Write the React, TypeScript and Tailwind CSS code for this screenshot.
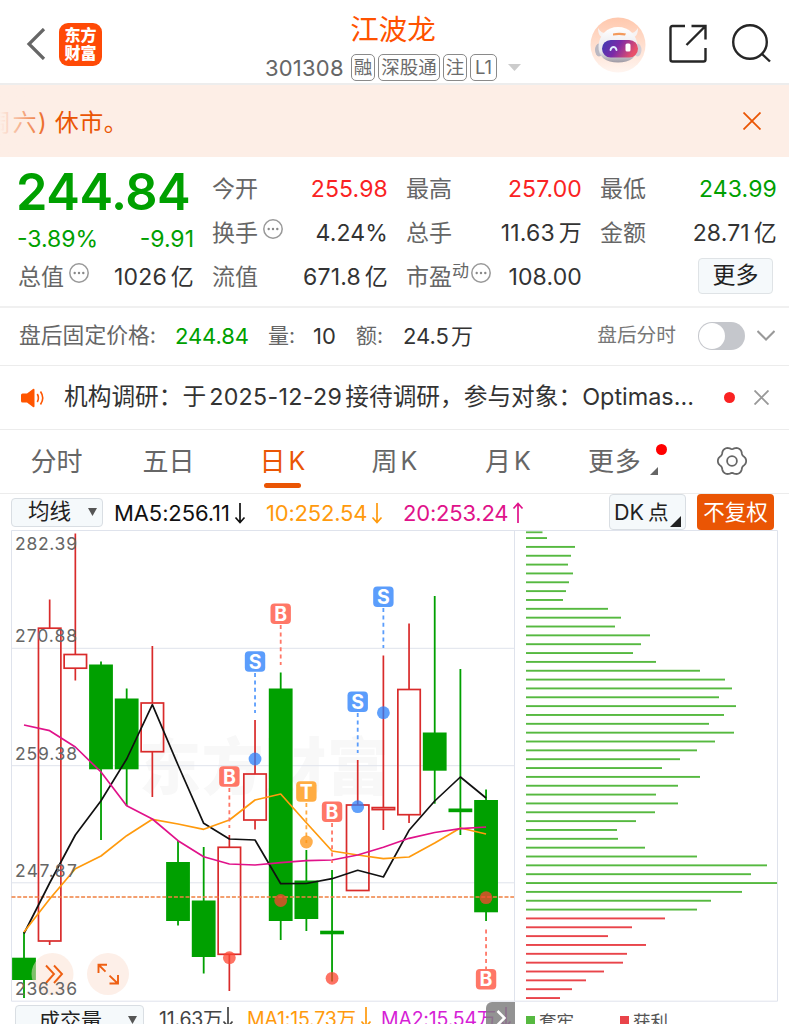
import type { ReactNode } from "react";
import clsx from "clsx";

const GREEN = "#00a000";
const RED = "#d92b2b";

type Candle = {
  up: boolean;
  high: number;
  top: number;
  bottom: number;
  low: number;
};

const candles: Candle[] = [
  { up: false, high: 932, top: 957.7, bottom: 980, low: 998 },
  { up: true, high: 599.5, top: 628.2, bottom: 941, low: 945 },
  { up: true, high: 533.5, top: 654.5, bottom: 668.2, low: 680.5 },
  { up: false, high: 661.5, top: 664.5, bottom: 769.3, low: 840 },
  { up: false, high: 688.5, top: 698.5, bottom: 769.3, low: 806 },
  { up: true, high: 646, top: 703, bottom: 751.7, low: 797 },
  { up: false, high: 841, top: 862, bottom: 921, low: 925.5 },
  { up: false, high: 847, top: 900.5, bottom: 957, low: 973.5 },
  { up: true, high: 835, top: 847.3, bottom: 954.3, low: 991 },
  { up: true, high: 720, top: 774, bottom: 820, low: 829.5 },
  { up: false, high: 672.5, top: 688.5, bottom: 921, low: 940 },
  { up: false, high: 850, top: 880.5, bottom: 919, low: 931 },
  { up: false, high: 870, top: 930.7, bottom: 934.3, low: 981.5 },
  { up: true, high: 760, top: 805, bottom: 890.5, low: 890.5 },
  { up: true, high: 655.5, top: 807.6, bottom: 809.6, low: 830 },
  { up: true, high: 623.5, top: 689.5, bottom: 814.7, low: 823 },
  { up: false, high: 596, top: 732.5, bottom: 770.7, low: 803.7 },
  { up: false, high: 669, top: 808.5, bottom: 812.2, low: 835 },
  { up: false, high: 789.5, top: 800, bottom: 912.3, low: 921 },
];

const candleX = (i: number) => 24 + i * 25.67;

const ma5 = [933.5, 883, 835, 800.7, 759, 704.7, 765, 823.3, 839, 840, 883.7, 883.5, 878.7, 870.3, 877, 830.3, 801, 777, 798];
const ma10 = [932, 899, 868.7, 856, 835.7, 819.3, 824, 829.3, 820, 800, 794, 822.7, 851, 855, 858.7, 857, 843, 828, 834];
const ma20 = [725, 730.7, 747, 772, 805.7, 819, 840.7, 856.7, 864, 865, 862.7, 860.7, 860, 855, 847.3, 838.3, 832.5, 828.7, 827];

const toPoints = (ys: number[]) => ys.map((y, i) => `${candleX(i)},${y}`).join(" ");

const markerColors: Record<string, string> = { B: "#ff7767", S: "#5b9dfc", T: "#ffac42" };
const dotColors: Record<string, string> = { B: "#fe4430", S: "#2b80fa", T: "#ff9310" };

const markers = [
  { kind: "B", i: 8, badge: 776.5, from: 788, dot: 957.7 },
  { kind: "S", i: 9, badge: 661.5, from: 673, dot: 759 },
  { kind: "B", i: 10, badge: 613.7, from: 625, dot: 900.5 },
  { kind: "T", i: 11, badge: 791.5, from: 803, dot: 842 },
  { kind: "B", i: 12, badge: 811.7, from: 823, dot: 978.3 },
  { kind: "S", i: 13, badge: 701.7, from: 713, dot: 806.7 },
  { kind: "S", i: 14, badge: 596.7, from: 608, dot: 712.7 },
  { kind: "B", i: 18, badge: 979.3, from: 929.5, dot: 897.7 },
];

const priceLabels = [
  { text: "282.39", y: 550 },
  { text: "270.88", y: 642.3 },
  { text: "259.38", y: 759.8 },
  { text: "247.87", y: 876.8 },
  { text: "236.36", y: 995 },
];

// right end of every chip-distribution bar, top to bottom
const chips = [
  547, 575, 571, 568, 573, 569, 566, 563, 608, 621, 615, 650, 641, 633, 656, 700, 725, 732, 719, 736, 724, 709, 734, 715,
  697, 680, 662, 700, 678, 656, 678, 655, 636, 617, 618, 645, 697, 767, 751, 777, 742, 711, 697, 665, 632, 608, 646, 627,
  623, 604, 586, 572, 560,
];
const FIRST_PROFIT = 43;

function KLineChart() {
  return (
    <svg viewBox="0 530 789 472" className="block h-[472px] w-[789px] shrink-0">
      <text
        x="139"
        y="790"
        fontSize="62"
        fontWeight="900"
        fill="#f8f8f8"
        textLength="250"
        fontFamily="Noto Sans CJK SC, sans-serif"
      >
        东方财富
      </text>

      <g stroke="#dfe3ec" strokeWidth="1">
        <path d="M11.5 648.3H514M11.5 765.7H514M11.5 882.8H514" />
        <path d="M11.5 530.5H777.5V1001.2H11.5ZM514.5 530.5V1001.2" fill="none" />
      </g>

      {candles.map((c, i) => {
        const x = candleX(i);
        if (!c.up) {
          return (
            <g key={i} fill={GREEN}>
              <rect x={x - 0.9} y={c.high} width="1.8" height={c.low - c.high} />
              <rect x={x - 11.9} y={c.top} width="23.8" height={c.bottom - c.top} />
            </g>
          );
        }
        return (
          <g key={i} stroke={RED} strokeWidth="1.7" fill="none">
            <path d={`M${x} ${c.high}V${c.top}M${x} ${c.bottom}V${c.low}`} />
            <rect x={x - 11.2} y={c.top} width="22.4" height={c.bottom - c.top} />
          </g>
        );
      })}

      <path d="M11.5 897H514" stroke="#f08040" strokeWidth="1.5" strokeDasharray="4 1.8" />

      <g fill="none" strokeWidth="1.7" strokeLinejoin="round">
        <polyline points={toPoints(ma5)} stroke="#111111" />
        <polyline points={toPoints(ma10)} stroke="#ff9a0d" />
        <polyline points={toPoints(ma20)} stroke="#e0128a" />
      </g>

      {markers.map((m) => {
        const x = candleX(m.i);
        return (
          <g key={m.i}>
            <path
              d={`M${x} ${m.from}V${m.from + 40}`}
              stroke={markerColors[m.kind]}
              strokeWidth="1.8"
              strokeDasharray="4 3.4"
            />
            <circle cx={x} cy={m.dot} r="6.4" fill={dotColors[m.kind]} fillOpacity="0.75" />
            <rect x={x - 10.2} y={m.badge - 10.2} width="20.4" height="20.4" rx="4" fill={markerColors[m.kind]} />
            <text
              x={x}
              y={m.badge + 7}
              textAnchor="middle"
              fontSize="19.5"
              fontWeight="700"
              fill="#ffffff"
              fontFamily="Inter, sans-serif"
            >
              {m.kind}
            </text>
          </g>
        );
      })}

      <circle cx="52.5" cy="974" r="21" fill="#fbdfd0" fillOpacity="0.5" />
      <path d="M46 965.5 54 974 46 983M54 965.5 62 974 54 983" fill="none" stroke="#ee5f12" strokeWidth="1.9" />
      <circle cx="108" cy="974" r="21" fill="#fdefe8" />
      <path
        d="M107 964.8H98.5V973M98.8 965 105.5 971.6M109.5 975.6 117.5 983.2M118 975V983.5H109.5"
        fill="none"
        stroke="#ee5f12"
        strokeWidth="1.9"
      />

      {priceLabels.map((p) => (
        <text key={p.text} x="15" y={p.y} fontSize="17.5" fill="#666666" textLength="62" fontFamily="Inter, sans-serif">
          {p.text}
        </text>
      ))}

      <rect x="526" y="531.4" width="16.5" height="1.8" fill="#5cb946" />
      {chips.map((end, i) => (
        <rect
          key={i}
          x="526"
          y={537.1 + i * 8.846}
          width={end - 526}
          height="1.9"
          fill={i < FIRST_PROFIT ? "#56b940" : "#e9444a"}
        />
      ))}
    </svg>
  );
}

function RobotAvatar() {
  return (
    <svg viewBox="0 0 56 56" className="mt-1 h-14 w-14">
      <defs>
        <linearGradient id="halo" x1="0" y1="0" x2="0" y2="1">
          <stop offset="0" stopColor="#ffc8ad" />
          <stop offset="1" stopColor="#fff5f0" />
        </linearGradient>
        <linearGradient id="visor" x1="0" y1="0" x2="1" y2="0.3">
          <stop offset="0" stopColor="#3a3cb4" />
          <stop offset="0.5" stopColor="#7b2aa8" />
          <stop offset="1" stopColor="#e8506a" />
        </linearGradient>
        <linearGradient id="shell" x1="0" y1="0" x2="0" y2="1">
          <stop offset="0" stopColor="#ffffff" />
          <stop offset="0.7" stopColor="#e6e5ea" />
          <stop offset="1" stopColor="#9d98a2" />
        </linearGradient>
      </defs>
      <circle cx="28" cy="28" r="27.5" fill="url(#halo)" />
      <ellipse cx="9" cy="33" rx="4" ry="6.5" fill="#bab8c2" />
      <ellipse cx="47.5" cy="33" rx="4" ry="6.5" fill="#d2ced6" />
      <path d="M8 11c0 6 2 9 6 10l6-5c-5 1-9 0-12-5ZM48 11c0 6-2 9-6 10l-6-5c5 1 9 0 12-5Z" fill="#f7f3f3" />
      <path d="M28 10c11 0 19 8 19.5 19C48 40 40 45.500 28 45.500S8 40 8.500 29C9 18 17 10 28 10Z" fill="url(#shell)" />
      <path d="M23 16.500q6-1.500 13 0l-1 2q-6-1-12 0Z" fill="#f39a5c" />
      <rect x="12" y="23" width="36" height="17.5" rx="8.7" fill="url(#visor)" />
      <path d="M20.500 33c1-4 5-4 6 0" fill="none" stroke="#dfeaff" strokeWidth="1.9" strokeLinecap="round" />
      <rect x="35.5" y="26.5" width="5" height="8" rx="1.5" fill="#ffffff" />
    </svg>
  );
}

function MoreInfo({ className }: { className?: string }) {
  return (
    <svg viewBox="0 0 20 20" className={clsx("h-5 w-5", className)}>
      <circle cx="10" cy="10" r="9.2" fill="none" stroke="#999999" strokeWidth="1.5" />
      <g fill="#888888">
        <circle cx="5.700" cy="10" r="1.2" />
        <circle cx="10" cy="10" r="1.2" />
        <circle cx="14.300" cy="10" r="1.2" />
      </g>
    </svg>
  );
}

// six soft lobes around the centre
const gearPath =
  Array.from({ length: 73 }, (_, i) => {
    const a = (i * 5 * Math.PI) / 180;
    const r = 13.2 + 1.1 * Math.cos(6 * a) - 0.15 * Math.cos(12 * a);
    return `${i ? "L" : "M"}${(16 + r * Math.cos(a)).toFixed(2)} ${(16 + r * Math.sin(a)).toFixed(2)}`;
  }).join("") + "Z";

function GearIcon() {
  return (
    <svg viewBox="0 0 32 32" className="h-8 w-8" fill="none" stroke="#666666" strokeWidth="1.8">
      <path d={gearPath} strokeLinejoin="round" />
      <circle cx="16" cy="16" r="4.9" />
    </svg>
  );
}

function Tag({ children, className }: { children: ReactNode; className: string }) {
  return (
    <span
      className={clsx(
        "flex h-[27px] items-center justify-center rounded-[5px] border border-[#8a8a8a] text-[18.5px] leading-none text-[#6b6b6b]",
        className,
      )}
    >
      {children}
    </span>
  );
}

function Header() {
  return (
    <header className="grid h-[85px] shrink-0 grid-cols-[265px_256px_1fr] border-b-2 border-[#ededed]">
      <div className="flex items-center pt-[5px] pl-[26px]">
        <svg viewBox="0 0 20 32" className="h-8 w-5" fill="none" stroke="#666666" strokeWidth="3.2">
          <path d="M18 1 3 16 18 31" />
        </svg>
        <div className="ml-[13px] flex h-[43px] w-[43px] flex-col items-center justify-center rounded-[9px] bg-[#ff4a06] text-[16px] leading-[18px] font-black text-white">
          <span>东方</span>
          <span>财富</span>
        </div>
      </div>
      <div className="flex flex-col items-center">
        <h1 className="mt-3 text-[28.5px] leading-[36px] text-[#ff5200]">江波龙</h1>
        <div className="mt-[6px] flex items-center self-stretch">
          <span className="w-[86px] text-[22px] leading-none tracking-[0.2px] text-[#666666]">301308</span>
          <Tag className="w-6">融</Tag>
          <Tag className="ml-[3px] w-[62px]">深股通</Tag>
          <Tag className="ml-[3px] w-6">注</Tag>
          <Tag className="ml-[3px] w-[27px]">L1</Tag>
          <svg viewBox="0 0 13 7" className="ml-[11px] h-[7px] w-[13px]">
            <path d="M0 0h13L6.500 7Z" fill="#cccccc" />
          </svg>
        </div>
      </div>
      <div className="flex items-center pt-[3px] pl-[69px]">
        <RobotAvatar />
        <svg viewBox="0 0 40 40" className="ml-[22px] h-10 w-10" fill="none" stroke="#262626" strokeWidth="2.4">
          <path d="M17 3H4.500Q2.500 3 2.500 5V36.500Q2.500 38.500 4.500 38.500H35.500Q37.500 38.500 37.500 36.500V25" />
          <path d="M23.500 3H37.500V16.500M37.500 3 18.500 22" />
        </svg>
        <svg viewBox="0 0 40 40" className="ml-[24px] h-10 w-10" fill="none" stroke="#262626" strokeWidth="2.4">
          <circle cx="18" cy="19" r="16.8" />
          <path d="M29.500 30.500 38 38.500" />
        </svg>
      </div>
    </header>
  );
}

function Notice() {
  return (
    <div className="relative flex h-[72px] shrink-0 items-center justify-between overflow-hidden bg-[#fdeee6] pr-7 text-[#ea5504]">
      <p className="mt-[3px] ml-[-13px] whitespace-nowrap text-[24px] leading-none">
        <span className="tracking-[1.5px]">周六</span>
        <span>)</span>
        <span className="ml-[8px] tracking-[0.5px]">休市。</span>
      </p>
      <div className="absolute inset-y-0 left-0 w-[52px] bg-linear-to-r from-[#fdeee6] to-transparent" />
      <svg viewBox="0 0 18 18" className="h-[18px] w-[18px]" fill="none" stroke="#ea5504" strokeWidth="1.8">
        <path d="M0.500 0.500 17.500 17.500M17.500 0.500 0.500 17.500" />
      </svg>
    </div>
  );
}

interface QuoteProps {
  label: ReactNode;
  value: string;
  unit?: string;
  tone?: string;
}

function Quote({ label, value, unit, tone = "text-[#333333]" }: QuoteProps) {
  return (
    <div className="flex h-11 items-center justify-between whitespace-nowrap leading-none">
      <span className="flex items-center text-[23px] text-[#666666]">{label}</span>
      <span className={clsx("flex items-center text-[23px] tracking-[0.15px]", tone)}>
        {value}
        {unit && <span className="ml-1">{unit}</span>}
      </span>
    </div>
  );
}

function Quotes() {
  return (
    <section className="grid h-[149px] shrink-0 grid-cols-[176px_176px_176px_177px] content-start gap-x-[18px] pt-[10px] pl-[18px]">
      <div className="row-span-2 text-[#00a000]">
        <div className="-mt-0.5 ml-[-2px] text-[50.5px] leading-[54px] font-semibold tracking-[-0.45px]">244.84</div>
        <div className="mt-2 ml-[-1px] flex justify-between text-[23px] leading-[24px]">
          <span>-3.89%</span>
          <span>-9.91</span>
        </div>
      </div>
      <Quote label="今开" value="255.98" tone="text-[#fa2222]" />
      <Quote label="最高" value="257.00" tone="text-[#fa2222]" />
      <Quote label="最低" value="243.99" tone="text-[#00a000]" />
      <Quote
        label={
          <>
            换手
            <MoreInfo className="mb-2 ml-[5px]" />
          </>
        }
        value="4.24%"
      />
      <Quote label="总手" value="11.63" unit="万" />
      <Quote label="金额" value="28.71" unit="亿" />
      <Quote
        label={
          <>
            总值
            <MoreInfo className="mb-2 ml-[5px]" />
          </>
        }
        value="1026"
        unit="亿"
      />
      <Quote label="流值" value="671.8" unit="亿" />
      <Quote
        label={
          <>
            市盈
            <span className="mb-3 text-[17px]">动</span>
            <MoreInfo className="mb-2 ml-[2px]" />
          </>
        }
        value="108.00"
      />
      <div className="flex h-11 items-center justify-end pr-1 pb-[3px]">
        <button className="flex h-9 w-[75px] items-center justify-center rounded-[4px] border border-[#dfe3e6] bg-[#f5f9fb] text-[23px] leading-none text-[#222222]">
          更多
        </button>
      </div>
    </section>
  );
}

function AfterHours() {
  return (
    <section className="flex h-[59px] shrink-0 items-center border-t-2 border-[#f0f0f0] pb-0.5 pl-[19px] text-[22px] leading-none whitespace-nowrap text-[#333333]">
      <span className="w-[156px] text-[21.8px] text-[#666666]">盘后固定价格:</span>
      <span className="w-[93px] tracking-[-0.1px] text-[#00a000]">244.84</span>
      <span className="w-[45px] text-[21px] text-[#666666]">量:</span>
      <span className="w-[43px]">10</span>
      <span className="w-[47px] text-[21px] text-[#666666]">额:</span>
      <span>
        24.5<span className="ml-[2px]">万</span>
      </span>
      <span className="ml-auto text-[19.7px] text-[#777777]">盘后分时</span>
      <div className="ml-[22px] h-7 w-[47px] rounded-full bg-[#c5c7cc] p-px">
        <div className="h-[26px] w-[26px] rounded-full bg-white" />
      </div>
      <svg viewBox="0 0 18 11" className="mr-[14px] ml-3 h-[11px] w-[18px]" fill="none" stroke="#999999" strokeWidth="2">
        <path d="M0.500 1 9 9.500 17.500 1" />
      </svg>
    </section>
  );
}

function NewsLine() {
  return (
    <section className="flex h-[64px] shrink-0 items-center border-t border-[#ececec] pl-5 whitespace-nowrap">
      <svg viewBox="0 0 24 20" className="h-5 w-6">
        <path d="M1 7Q1 5.500 2.500 5.500H7L13 1Q14.500 0.300 14.500 2V18Q14.500 19.700 13 19L7 14.500H2.500Q1 14.500 1 13Z" fill="#ff5500" />
        <path d="M17.300 6Q19.500 10 17.300 14M20.500 3.500Q25 10 20.500 16.500" fill="none" stroke="#ff5500" strokeWidth="1.6" />
      </svg>
      <p className="ml-5 text-[23.7px] leading-none text-[#333333]">
        机构调研：于
        <span className="mx-[3px] text-[23.2px] tracking-[0.35px]">2025-12-29</span>接待调研，参与对象：
        <span className="text-[23.4px]">Optimas...</span>
      </p>
      <i className="mr-[19px] ml-auto h-[11px] w-[11px] rounded-full bg-[#fa2222]" />
      <svg viewBox="0 0 15 15" className="mr-5 h-[15px] w-[15px]" fill="none" stroke="#999999" strokeWidth="1.9">
        <path d="M0.500 0.500 14.500 14.500M14.500 0.500 0.500 14.500" />
      </svg>
    </section>
  );
}

const tabs = [
  { label: "分时", width: "w-[113px]" },
  { label: "五日", width: "w-[111px]" },
  { label: "日", k: true, width: "w-[117px]", active: true },
  { label: "周", k: true, width: "w-[107px]" },
  { label: "月", k: true, width: "w-[120px]" },
];

function Tabs() {
  return (
    <nav className="flex h-[64px] shrink-0 items-stretch border-t border-[#ececec] text-[26px] leading-none whitespace-nowrap text-[#666666]">
      {tabs.map((t) => (
        <div
          key={t.label}
          className={clsx("relative flex items-center justify-center", t.width, t.active && "text-[#ea5504]")}
        >
          <span>{t.label}</span>
          {t.k && <span className="ml-[3px] text-[25px]">K</span>}
          {t.active && <i className="absolute bottom-[5px] h-[5px] w-[37px] rounded-full bg-[#ea5504]" />}
        </div>
      ))}
      <div className="relative flex items-center pl-5">
        <span className="tracking-[0.8px]">更多</span>
        <i className="absolute top-[14px] left-[88px] h-[11px] w-[11px] rounded-full bg-[#ff0000]" />
        <svg viewBox="0 0 8 8" className="absolute top-[37px] left-[82px] h-2 w-2">
          <path d="M8 0V8H0Z" fill="#666666" />
        </svg>
      </div>
      <div className="mr-[41px] ml-auto flex items-center pb-0.5">
        <GearIcon />
      </div>
    </nav>
  );
}

function Arrow({ up = false, className = "ml-[4px]" }: { up?: boolean; className?: string }) {
  return (
    <svg
      viewBox="0 0 12 22"
      className={clsx("h-[22px] w-3", className)}
      fill="none"
      stroke="currentColor"
      strokeWidth="1.7"
    >
      <path d={up ? "M6 21V2M1.500 6.500 6 1.500 10.500 6.500" : "M6 1V20M1.500 15.500 6 20.500 10.500 15.500"} />
    </svg>
  );
}

function MaBar() {
  return (
    <section className="flex h-[37px] shrink-0 items-center border-t border-[#ececec] pl-[11px] text-[22px] leading-none whitespace-nowrap">
      <div className="flex h-[29px] w-[92px] shrink-0 items-center rounded-[4px] border border-[#d9dee3] bg-[#f5f9fb] pl-4 text-[21.5px] text-[#222222]">
        均线
        <svg viewBox="0 0 9 8" className="ml-[17px] h-2 w-[9px]">
          <path d="M0 0h9L4.500 8Z" fill="#555555" />
        </svg>
      </div>
      <span className="ml-[11px] flex w-[152px] items-center pt-0.5 tracking-[-0.1px] text-[#111111]">
        MA5:256.11
        <Arrow />
      </span>
      <span className="flex w-[137px] items-center pt-0.5 tracking-[-0.2px] text-[#ff9a0d]">
        10:252.54
        <Arrow />
      </span>
      <span className="flex items-center pt-0.5 tracking-[-0.2px] text-[#e0128a]">
        20:253.24
        <Arrow up />
      </span>
      <div className="relative mr-[11px] ml-auto flex h-9 w-[77px] items-center rounded-[4px] border border-[#d9dee3] bg-[#f5f9fb] pt-0.5 pl-1 text-[21.5px] text-[#222222]">
        DK<span className="ml-1 text-[20.5px]">点</span>
        <svg viewBox="0 0 11 11" className="absolute right-1 bottom-0.5 h-[11px] w-[11px]">
          <path d="M11 0V11H0Z" fill="#222222" />
        </svg>
      </div>
      <div className="mr-[15px] flex h-9 w-[77px] items-center justify-center rounded-[4px] bg-[#ea5504] pt-px text-[21.5px] text-white">
        不复权
      </div>
    </section>
  );
}

function VolumeBar() {
  return (
    <section className="flex h-[44px] shrink-0 items-start text-[19.5px] leading-none whitespace-nowrap">
      <div className="relative flex h-full w-[515px] items-start overflow-hidden pl-[15px]">
        <div className="mt-[3px] flex h-[30px] w-[129px] shrink-0 items-center rounded-[4px] border border-[#d9dee3] bg-[#f5f9fb] pl-[23px] text-[21px] text-[#222222]">
          成交量
          <svg viewBox="0 0 9 8" className="ml-[26px] h-2 w-[9px]">
            <path d="M0 0h9L4.500 8Z" fill="#555555" />
          </svg>
        </div>
        <div className="mt-[8px] flex tracking-[-0.2px]">
          <span className="ml-[15px] flex w-[88px] text-[#444444]">
            11.63万
            <Arrow className="-mt-1" />
          </span>
          <span className="flex w-[134px] text-[#ff9a0d]">
            MA1:15.73万
            <Arrow className="-mt-1 ml-1" />
          </span>
          <span className="flex text-[#d61fd6]">
            MA2:15.54万
            <Arrow className="-mt-1 ml-1" />
          </span>
        </div>
        <div className="absolute top-0 right-0 flex h-full w-[29px] justify-center rounded-tl-[6px] bg-[#808080]/85 pt-2">
          <svg viewBox="0 0 10 16" className="h-4 w-[10px]" fill="none" stroke="#ffffff" strokeWidth="2.5">
            <path d="M1.500 1 8.500 8 1.500 15" />
          </svg>
        </div>
      </div>
      <div className="mt-[11px] ml-[11px] flex text-[17.5px] text-[#555555]">
        <i className="mt-[3px] mr-[4px] h-[10px] w-[9px] bg-[#56b940]" />
        <span className="w-[81px]">套牢</span>
        <i className="mt-[3px] mr-[4px] h-[10px] w-[9px] bg-[#e9444a]" />
        <span>获利</span>
      </div>
    </section>
  );
}

export default function App() {
  return (
    <main className="flex h-[1024px] w-[789px] flex-col overflow-hidden bg-white font-['Inter','Noto_Sans_CJK_SC',sans-serif]">
      <Header />
      <Notice />
      <Quotes />
      <AfterHours />
      <NewsLine />
      <Tabs />
      <MaBar />
      <KLineChart />
      <VolumeBar />
    </main>
  );
}
